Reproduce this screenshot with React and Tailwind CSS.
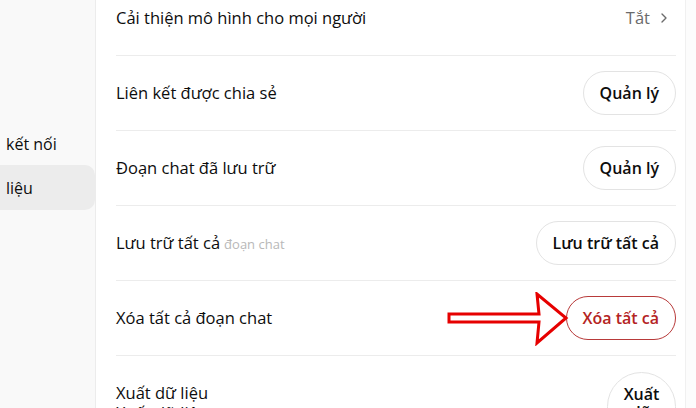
import React from 'react';
import { ChevronRight } from 'lucide-react';

const rows = [
  { label: 'Cải thiện mô hình cho mọi người', kind: 'toggle' },
  { label: 'Liên kết được chia sẻ', button: 'Quản lý' },
  { label: 'Đoạn chat đã lưu trữ', button: 'Quản lý' },
  { label: 'Lưu trữ tất cả', ghost: 'đoạn chat', button: 'Lưu trữ tất cả' },
  { label: 'Xóa tất cả đoạn chat', button: 'Xóa tất cả', danger: true },
];

function Arrow() {
  return (
    <svg className="absolute left-[447px] top-[292px]" width="124" height="54" viewBox="0 0 124 54">
      <path
        d="M2 22 L92 22 L90 2 L119 26 L90 51 L92 30 L2 30 Z"
        fill="white"
        stroke="#e60000"
        strokeWidth="3"
        strokeLinejoin="miter"
      />
    </svg>
  );
}

export default function App() {
  return (
    <div className="relative flex h-[408px] w-[696px] overflow-hidden bg-white text-[#0d0d0d]" style={{ fontFamily: '"Open Sans", "Noto Sans", sans-serif' }}>
      {/* sidebar */}
      <aside className="w-[96px] shrink-0 border-r border-[#ececec] bg-[#f9f9f9] pt-[129px] text-[16px]">
        <div className="flex h-[29px] items-center pl-[6px]">kết nối</div>
        <div className="mt-[7px] flex h-[45px] items-center rounded-r-[10px] bg-[#ececec] pl-[6px]">liệu</div>
      </aside>

      {/* main list */}
      <main className="flex-1 pl-5 pr-[9px]">
        <div className="-mt-[19px]">
          {rows.map((r, i) => (
            <div key={i} className="flex h-[75px] items-center justify-between border-b border-[#ececec] text-[16.5px]">
              <span>
                {r.label}
                {r.ghost && <span className="ml-1 text-[13px] text-[#b8b8b8]">{r.ghost}</span>}
              </span>
              {r.kind === 'toggle' ? (
                <span className="flex items-center gap-[6px] pr-1 text-[#6b6b6b]">
                  Tắt <ChevronRight size={16} strokeWidth={2} />
                </span>
              ) : (
                <button
                  className={`h-[44px] rounded-full border px-4 text-[16px] font-semibold ${
                    r.danger ? 'border-[#b83a3a] text-[#b42323]' : 'border-[#e3e3e3] text-[#0d0d0d]'
                  }`}
                >
                  {r.button}
                </button>
              )}
            </div>
          ))}
          <div className="flex items-start justify-between pt-[16px] text-[16.5px]">
            <div className="pt-[12px] leading-[18px]">
              <div>Xuất dữ liệu</div>
              <div className="mt-[2px]">Xuất dữ liệu</div>
            </div>
            <button className="w-[69px] rounded-full border border-[#e3e3e3] px-3 py-[12px] text-[16px] font-semibold leading-[18px]">
              Xuất dữ liệu
            </button>
          </div>
        </div>
      </main>

      {/* scrollbar track */}
      <div className="w-[11px] shrink-0 border-l border-[#f0f0f0] bg-[#fcfcfc]" />

      <Arrow />
    </div>
  );
}
